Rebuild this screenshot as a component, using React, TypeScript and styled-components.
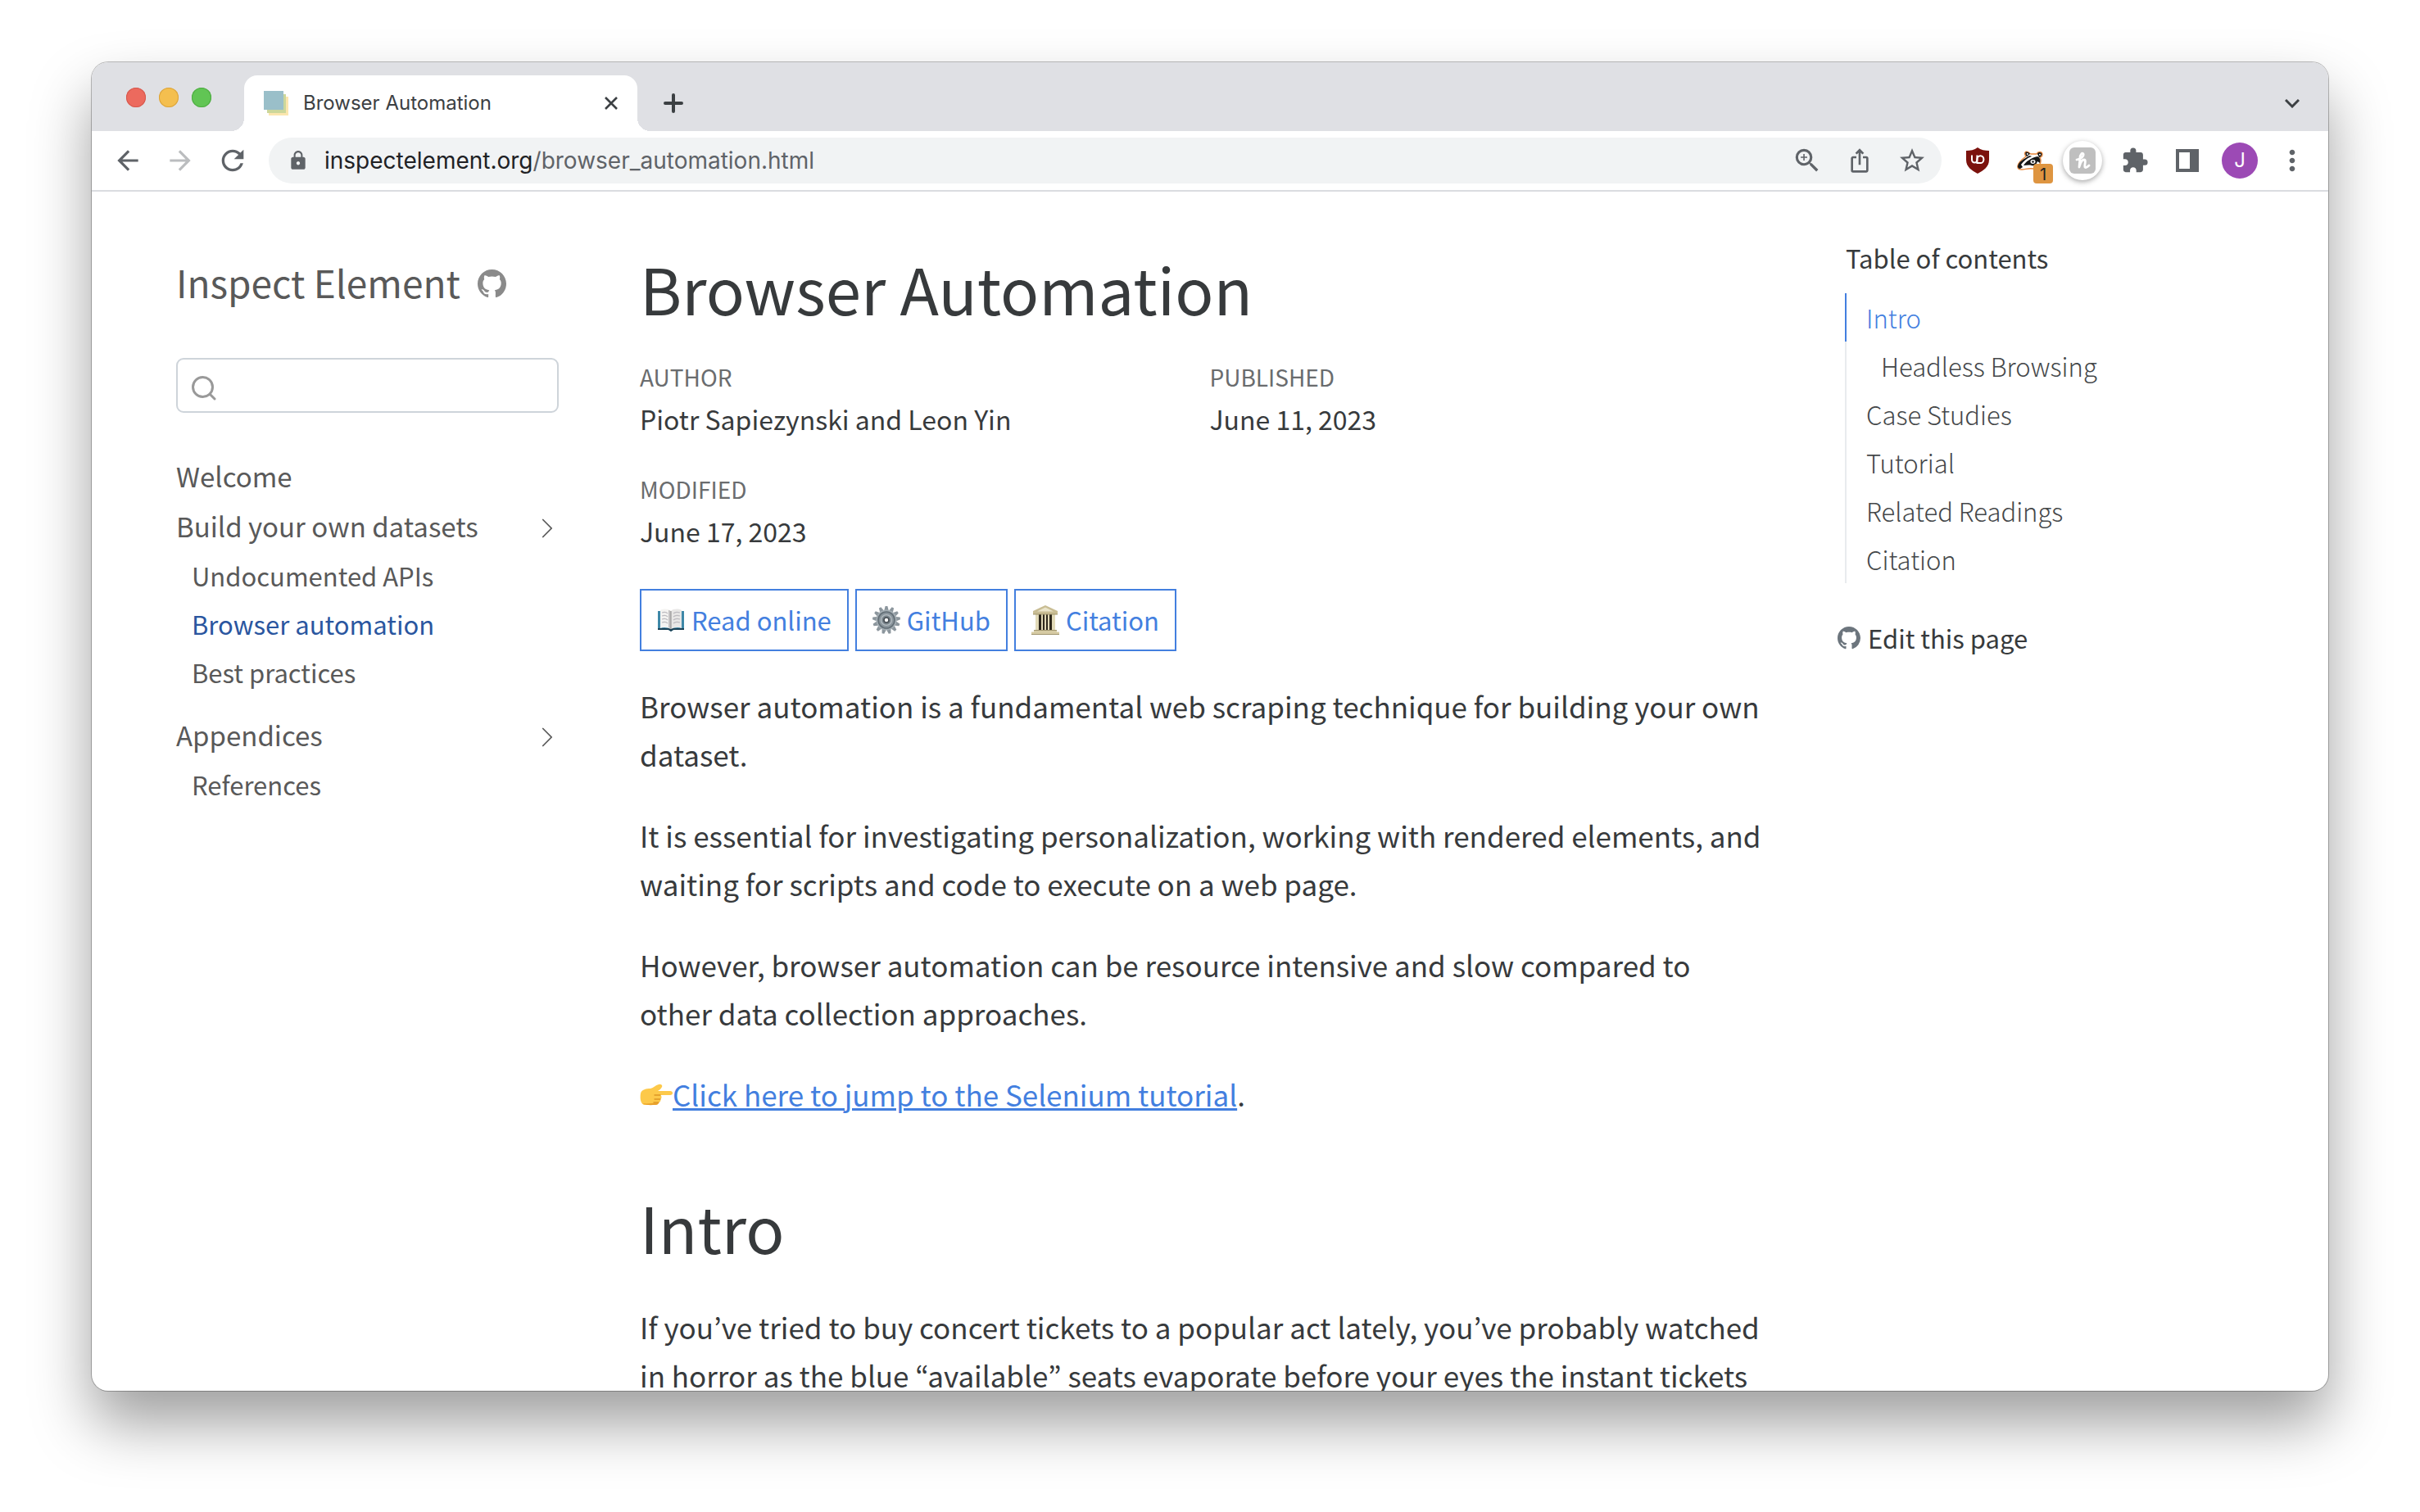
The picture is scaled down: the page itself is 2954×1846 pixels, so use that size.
import React from "react";
import styled, { createGlobalStyle } from "styled-components";
import { MdArrowBack, MdArrowForward, MdRefresh, MdLock, MdZoomIn, MdIosShare, MdStarBorder, MdExtension, MdMoreVert } from "react-icons/md";
import { BsGithub, BsChevronRight } from "react-icons/bs";

const ui = `Inter, Roboto, "Liberation Sans", sans-serif`;
const page = `"Noto Sans CJK KR", "Noto Sans", sans-serif`;
const blue = "#437fdf";

const GlobalStyle = createGlobalStyle`
  * { box-sizing: border-box; }
  body { margin: 0; background: #fff; }
  h1, h2, h3, p, ul, dl, dd, dt { margin: 0; padding: 0; font-weight: 400; }
  ul { list-style: none; }
  button { border: 0; background: none; padding: 0; color: inherit; font: inherit; cursor: pointer; }
  a { color: inherit; text-decoration: none; }
  svg { display: block; flex: none; }
`;

const Desktop = styled.div`
  height: 100vh;
  padding: 76px 112px 148px;
  overflow: hidden;
`;

const BrowserWindow = styled.div`
  display: flex;
  flex-direction: column;
  height: 100%;
  overflow: hidden;
  border-radius: 20px;
  background: #fff;
  box-shadow: 0 0 0 1px rgba(0, 0, 0, 0.26), 0 40px 72px rgba(0, 0, 0, 0.38);
`;

/* ---------- browser chrome ---------- */

const TabStrip = styled.div`
  display: flex;
  align-items: flex-end;
  flex: none;
  height: 84px;
  padding: 0 28px 0 42px;
  background: #dfe0e4;
  color: #3c4043;
  font-family: ${ui};
`;

const TrafficLights = styled.div`
  display: flex;
  gap: 16px;
  height: 84px;
  padding-top: 31px;
  margin-right: 40px;
`;

const Light = styled.button<{ $fill: string; $edge: string }>`
  width: 24px;
  height: 24px;
  border-radius: 50%;
  background: ${(p) => p.$fill};
  box-shadow: inset 0 0 0 1px ${(p) => p.$edge};
`;

const Tab = styled.div`
  position: relative;
  display: flex;
  align-items: center;
  width: 480px;
  height: 68px;
  padding: 0 20px 0 24px;
  border-radius: 16px 16px 0 0;
  background: #fff;
  &::before, &::after {
    content: "";
    position: absolute;
    bottom: 0;
    width: 16px;
    height: 16px;
  }
  &::before { right: 100%; background: radial-gradient(circle at 0 0, transparent 16px, #fff 16px); }
  &::after { left: 100%; background: radial-gradient(circle at 100% 0, transparent 16px, #fff 16px); }
`;

const TabTitle = styled.span`
  flex: 1;
  margin-left: 16px;
  font-size: 24px;
  line-height: 32px;
`;

const IconButton = styled.button<{ $size: number; $color?: string }>`
  display: grid;
  place-items: center;
  flex: none;
  width: ${(p) => p.$size}px;
  height: ${(p) => p.$size}px;
  color: ${(p) => p.$color || "#5f6368"};
`;

const NewTab = styled(IconButton)`
  margin: 0 auto 12px 22px;
`;

const TabSearch = styled(IconButton)`
  margin-bottom: 18px;
`;

const Toolbar = styled.div`
  display: flex;
  align-items: center;
  flex: none;
  height: 74px;
  padding: 0 12px;
  border-bottom: 2px solid #dadce0;
  font-family: ${ui};
`;

const AddressBar = styled.div`
  display: flex;
  align-items: center;
  flex: 1;
  height: 56px;
  margin: 0 12px;
  padding: 0 4px 0 23px;
  border-radius: 28px;
  background: #f1f3f4;
`;

const Address = styled.button`
  flex: 1;
  margin-left: 19px;
  text-align: left;
  font-size: 28px;
  line-height: 36px;
  color: #5f6368;
  cursor: text;
`;

const Host = styled.span`
  color: #202124;
`;

const Extension = styled(IconButton)`
  position: relative;
`;

const Badge = styled.span`
  position: absolute;
  left: 36px;
  top: 36px;
  width: 24px;
  height: 24px;
  border-radius: 4px;
  background: #de9541;
  color: #202124;
  font: 20px/26px ${ui};
  text-align: center;
`;

const HoneyDisc = styled.span`
  display: grid;
  place-items: center;
  width: 48px;
  height: 48px;
  border-radius: 50%;
  background: #fff;
  box-shadow: 0 2px 6px rgba(0, 0, 0, 0.35);
`;

const Avatar = styled.span`
  display: grid;
  place-items: center;
  width: 44px;
  height: 44px;
  border-radius: 50%;
  background: #9c4ab5;
  color: #fff;
  font: 24px/44px ${ui};
`;

/* ---------- page ---------- */

const Page = styled.div`
  display: grid;
  grid-template-columns: 486fr 1391fr 487fr;
  column-gap: 80px;
  flex: 1;
  min-height: 0;
  overflow: hidden;
  padding: 0 103px;
  font-family: ${page};
  color: #373a3c;
`;

const Sidebar = styled.nav`
  padding: 78px 19px 0 0;
  color: #595959;
`;

const SiteTitle = styled.div`
  display: flex;
  align-items: baseline;
  gap: 21px;
  font-size: 46px;
  line-height: 64px;
  svg { color: #8a8a8a; }
`;

const SearchBox = styled.label`
  display: flex;
  align-items: center;
  height: 67px;
  margin: 61px 0 47px;
  padding: 6px 17px 0;
  border: 2px solid #ced4da;
  border-radius: 9px;
  color: #999;
`;

const SearchInput = styled.input`
  flex: 1;
  min-width: 0;
  margin-left: 12px;
  border: 0;
  outline: 0;
  background: none;
  font: 32px/40px ${page};
`;

const NavRow = styled.li`
  display: flex;
  align-items: center;
  justify-content: space-between;
  font-size: 33px;
  line-height: 61px;
  svg { margin-top: 4px; }
`;

const SubList = styled.ul`
  padding: 0 0 17px 19px;
`;

const SubItem = styled.li<{ $active?: boolean }>`
  font-size: 31px;
  line-height: 59px;
  color: ${(p) => (p.$active ? "#2a569f" : "inherit")};
`;

const Main = styled.main`
  min-width: 0;
  padding-top: 73px;
`;

const Heading = styled.h1`
  font-size: 78px;
  line-height: 88px;
`;

const SectionHeading = styled.h2`
  margin: 88px 0 49px;
  font-size: 78px;
  line-height: 88px;
`;

const Meta = styled.dl`
  display: grid;
  grid-template-columns: 1fr 1fr;
  row-gap: 35px;
  margin-top: 39px;
`;

const MetaLabel = styled.dt`
  font-size: 28px;
  line-height: 52px;
  color: #6a6c6e;
`;

const MetaValue = styled.dd`
  font-size: 32px;
  line-height: 50px;
`;

const Actions = styled.div`
  display: flex;
  gap: 8px;
  margin: 46px 0 37px;
`;

const Action = styled.a`
  display: flex;
  align-items: center;
  gap: 8px;
  height: 76px;
  padding: 0 19px;
  border: 2px solid ${blue};
  color: ${blue};
  font-size: 31px;
  line-height: 44px;
`;

const Paragraph = styled.p`
  margin: 0 20px 40px 0;
  font-size: 35px;
  line-height: 59px;
`;

const Hand = styled.span`
  display: inline-block;
  vertical-align: 1px;
`;

const InlineLink = styled.a`
  color: ${blue};
  text-decoration: underline;
  text-decoration-thickness: 3px;
`;

const Toc = styled.aside`
  padding-top: 52px;
`;

const TocTitle = styled.h2`
  padding-left: 1px;
  font-size: 31px;
  line-height: 58px;
`;

const TocList = styled.ul`
  margin-top: 14px;
`;

const TocItem = styled.li<{ $active?: boolean; $nested?: boolean }>`
  padding-left: ${(p) => (p.$nested ? 42 : 24)}px;
  border-left: 2px solid ${(p) => (p.$active ? blue : "#e9ebee")};
  color: ${(p) => (p.$active ? blue : "#45484a")};
  font-size: 31px;
  font-weight: 300;
  line-height: 59px;
`;

const EditLink = styled.a`
  display: flex;
  align-items: center;
  gap: 9px;
  margin: 38px 0 0 -9px;
  font-size: 31px;
  line-height: 58px;
  svg { color: #6c757d; }
`;

/* ---------- drawings ---------- */

const Favicon = () => (
  <svg width="32" height="32" viewBox="0 0 32 32">
    <rect x="6" y="8" width="24" height="23" fill="#fbe6ae" />
    <rect x="4" y="5" width="23" height="23" fill="#ccd79b" />
    <rect x="0" y="1" width="24" height="23" fill="#9abfc9" />
  </svg>
);

const Shield = () => (
  <svg width="28" height="32" viewBox="0 0 28 32">
    <path d="M14 0 C10 3 5 4 0 4 V15 C0 24 7 28 14 32 C21 28 28 24 28 15 V4 C23 4 18 3 14 0Z" fill="#7b120d" />
    <path d="M7 9.5 V15 A3.2 3.6 0 0 0 13.4 15 V9.5" fill="none" stroke="#fff" strokeWidth="2" />
    <path d="M13.4 14.5 A4 4.4 0 1 1 17.4 19 H13.4Z" fill="none" stroke="#fff" strokeWidth="2" />
  </svg>
);

const Badger = () => (
  <svg width="32" height="24" viewBox="0 0 32 24">
    <path d="M1 20 C0 16 4 12 11 7 C8 3 10 0 14 2 L17 4 H24 C26 0 31 1 31 5 C31 7 29 8 28 8 C31 14 27 21 20 22 C14 21 10 23 6 23 C3 23 1 22 1 20Z" fill="#fff" stroke="#e8873a" strokeWidth="1.4" />
    <path d="M10.500 2 C12 1 15 2 16 4 L12 7 C10 5 10 3 10.500 2Z M25 4 C26 1 30 2 30.500 4 C30 7 28 8 27 8Z" fill="#161616" />
    <circle cx="12.800" cy="4" r="1" fill="#fff" />
    <circle cx="28" cy="4.800" r="1" fill="#fff" />
    <path d="M1 19 C2 14 7 11 12 8 C14 6 17 6 18 7 C12 9 8 13 5 17 L7 20 L4 22 C2 22 1 21 1 19Z" fill="#161616" />
    <path d="M8 18 C11 13 17 9 25 7 C28 8 29 11 28 15 L25 13 C24 17 21 19 18 18 C14 17 11 18 8 18Z" fill="#161616" />
    <ellipse cx="19.500" cy="13.500" rx="3" ry="2.400" fill="#fff" />
    <circle cx="19.500" cy="13.500" r="1.300" fill="#161616" />
  </svg>
);

const Honey = () => (
  <svg width="32" height="32" viewBox="0 0 32 32">
    <rect width="32" height="32" rx="6" fill="#bfbfbf" />
    <path d="M9 15 C14 14 18 11 17 8 C16 6 13 8 13 13 L12 24 C13 20 15 15 18 15 C21 15 18 22 19 24 C20 25 22 24 24 22" fill="none" stroke="#fff" strokeWidth="2.8" strokeLinecap="round" strokeLinejoin="round" />
  </svg>
);

const SidePanel = () => (
  <svg width="28" height="28" viewBox="0 0 28 28">
    <path d="M0 0H28V28H0Z M4 4V24H17V4Z" fill="currentColor" fillRule="evenodd" />
  </svg>
);

const Magnifier = () => (
  <svg width="30" height="30" viewBox="0 0 30 30" fill="none" stroke="currentColor" strokeWidth="3" strokeLinecap="round">
    <circle cx="13.5" cy="13.5" r="12" />
    <path d="M22.5 22.5 L28 28" />
  </svg>
);

const Book = () => (
  <svg width="34" height="28" viewBox="0 0 34 28">
    <path d="M1 3 H33 V26 H20 L17 28 L14 26 H1Z" fill="#3f88a8" />
    <path d="M1 24 H33 V26 H20 L17 28 L14 26 H1Z" fill="#1c4256" />
    <path d="M4 2 C8 0 14 0 17 3 V25 C13 23 8 22 4 24Z" fill="#f4f3f1" />
    <path d="M30 2 C26 0 20 0 17 3 V25 C21 23 26 22 30 24Z" fill="#e8e7e6" />
    <path d="M14 2 C16 2 17 3 17 4 V25 L14 23Z" fill="#c3c1c2" />
    <path d="M17 3 V25" stroke="#8c8c8c" strokeWidth="1" />
    <path d="M6 5 C9 4 11 4 13 6 M6 9 C9 8 11 8 13 10 M6 13 C9 12 11 12 13 14 M6 17 C9 16 11 16 13 18 M20 6 C22 4 25 4 28 5 M20 10 C22 8 25 8 28 9 M20 14 C22 12 25 12 28 13 M20 18 C22 16 25 16 28 17" fill="none" stroke="#bcbabf" strokeWidth="1.2" />
  </svg>
);

const Gear = () => (
  <svg width="34" height="36" viewBox="0 0 34 36">
    {Array.from({ length: 13 }, (_, i) => (
      <path key={i} d="M14.4 6 L15.6 1 H18.4 L19.6 6Z" fill="#8c969d" transform={`rotate(${(i * 360) / 13} 17 18)`} />
    ))}
    <circle cx="17" cy="18" r="12.6" fill="#a3adb3" />
    <circle cx="17" cy="18" r="10" fill="#8a959c" stroke="#636e76" strokeWidth="1.6" />
    <circle cx="17" cy="18" r="6.4" fill="#7a858c" stroke="#b3bbc0" strokeWidth="1.4" />
    <circle cx="17" cy="18" r="3" fill="#fff" stroke="#464d53" strokeWidth="1.6" />
  </svg>
);

const Temple = () => (
  <svg width="34" height="36" viewBox="0 0 34 36">
    <path d="M17 0 L32 7 V11 H2 V7Z" fill="#c9bd94" />
    <path d="M17 2.500 L27 7.500 H7Z" fill="#ebe5cb" />
    <rect x="5" y="11" width="24" height="19" fill="#2e281c" />
    <path d="M5 11h4v19h-4z M12 11h2v19h-2z M16 11h2v19h-2z M20 11h2v19h-2z M25 11h4v19h-4z" fill="#e2dab8" />
    <path d="M3 30H31V32.500H34V36H0V32.500H3Z" fill="#d6cba4" />
    <path d="M0 35.500H34 M3 30.500H31 M2 11H32" stroke="#a0956e" />
  </svg>
);

const PointingHand = () => (
  <svg width="40" height="27" viewBox="0 0 40 27">
    <path d="M1 12 C2 7 8 6 13 6 C17 5 19 2 23 1 C26 0 28 2 27 4 C26 6 24 8 22 9 H37 C41 9 41 14 37 14 H25 C27 15 27 18 25 19 C26 21 25 22 23 23 C23 25 21 26 19 26 H5 C1 24 0 18 1 12Z" fill="#fdc94a" />
    <path d="M25 14 H18 M25 19 H18 M23 23 H17" stroke="#dd9726" strokeWidth="1.4" strokeLinecap="round" />
    <path d="M3 24 C8 27 15 26 19 26 C21 26 23 25 23 23 C16 24 8 25 3 24Z" fill="#e9a02a" />
  </svg>
);

const subPages = ["Undocumented APIs", "Browser automation", "Best practices"];
const tocEntries = ["Intro", "Headless Browsing", "Case Studies", "Tutorial", "Related Readings", "Citation"];
const facts = [
  ["AUTHOR", "Piotr Sapiezynski and Leon Yin"],
  ["PUBLISHED", "June 11, 2023"],
  ["MODIFIED", "June 17, 2023"],
];

export default function App() {
  return (
    <Desktop lang="en">
      <GlobalStyle />
      <BrowserWindow>
        <TabStrip>
          <TrafficLights>
            <Light $fill="#ec6a5e" $edge="#d5584d" aria-label="Close window" />
            <Light $fill="#f4bf4f" $edge="#dba33b" aria-label="Minimize window" />
            <Light $fill="#61c554" $edge="#4eab42" aria-label="Zoom window" />
          </TrafficLights>
          <Tab>
            <Favicon />
            <TabTitle>Browser Automation</TabTitle>
            <IconButton $size={24} $color="#3c4043" aria-label="Close tab">
              <svg width="16" height="16" viewBox="0 0 16 16" stroke="currentColor" strokeWidth="2.6"><path d="M1 1L15 15M15 1L1 15" /></svg>
            </IconButton>
          </Tab>
          <NewTab $size={44} $color="#3c4043" aria-label="New tab">
            <svg width="24" height="24" viewBox="0 0 24 24" stroke="currentColor" strokeWidth="4" strokeLinecap="round"><path d="M2 12H22M12 2V22" /></svg>
          </NewTab>
          <TabSearch $size={32} $color="#3c4043" aria-label="Search tabs">
            <svg width="18" height="11" viewBox="0 0 18 11" fill="none" stroke="currentColor" strokeWidth="3"><path d="M1 1L9 9L17 1" /></svg>
          </TabSearch>
        </TabStrip>

        <Toolbar>
          <IconButton $size={64} aria-label="Back"><MdArrowBack size={38} /></IconButton>
          <IconButton $size={64} $color="#bbbdbf" aria-label="Forward"><MdArrowForward size={38} /></IconButton>
          <IconButton $size={64} aria-label="Reload"><MdRefresh size={40} /></IconButton>
          <AddressBar>
            <MdLock size={26} color="#5f6368" />
            <Address aria-label="Address"><Host>inspectelement.org</Host>/browser_automation.html</Address>
            <IconButton $size={64} aria-label="Zoom"><MdZoomIn size={38} /></IconButton>
            <IconButton $size={64} aria-label="Share"><MdIosShare size={32} /></IconButton>
            <IconButton $size={64} aria-label="Bookmark"><MdStarBorder size={36} /></IconButton>
          </AddressBar>
          <Extension $size={64} aria-label="uBlock Origin"><Shield /></Extension>
          <Extension $size={64} aria-label="Privacy Badger"><Badger /><Badge>1</Badge></Extension>
          <Extension $size={64} aria-label="Honey"><HoneyDisc><Honey /></HoneyDisc></Extension>
          <IconButton $size={64} aria-label="Extensions"><MdExtension size={34} /></IconButton>
          <IconButton $size={64} aria-label="Side panel"><SidePanel /></IconButton>
          <IconButton $size={64} aria-label="Profile"><Avatar>J</Avatar></IconButton>
          <IconButton $size={64} aria-label="Menu"><MdMoreVert size={40} /></IconButton>
        </Toolbar>

        <Page>
          <Sidebar>
            <SiteTitle>
              <a href="#home">Inspect Element</a>
              <a href="#source" aria-label="Source code"><BsGithub size={35} /></a>
            </SiteTitle>
            <SearchBox>
              <Magnifier />
              <SearchInput type="search" aria-label="Search" />
            </SearchBox>
            <ul>
              <NavRow><a href="#welcome">Welcome</a></NavRow>
              <NavRow>
                <a href="#datasets">Build your own datasets</a>
                <button aria-label="Toggle section"><BsChevronRight size={28} /></button>
              </NavRow>
              <SubList>
                {subPages.map((name) => (
                  <SubItem key={name} $active={name === "Browser automation"}><a href="#page">{name}</a></SubItem>
                ))}
              </SubList>
              <NavRow>
                <a href="#appendices">Appendices</a>
                <button aria-label="Toggle section"><BsChevronRight size={28} /></button>
              </NavRow>
              <SubList>
                <SubItem><a href="#references">References</a></SubItem>
              </SubList>
            </ul>
          </Sidebar>

          <Main>
            <Heading>Browser Automation</Heading>
            <Meta>
              {facts.map(([label, value]) => (
                <div key={label}>
                  <MetaLabel>{label}</MetaLabel>
                  <MetaValue>{value}</MetaValue>
                </div>
              ))}
            </Meta>
            <Actions>
              <Action href="#read"><Book />Read online</Action>
              <Action href="#github"><Gear />GitHub</Action>
              <Action href="#citation"><Temple />Citation</Action>
            </Actions>
            <Paragraph>Browser automation is a fundamental web scraping technique for building your own dataset.</Paragraph>
            <Paragraph>It is essential for investigating personalization, working with rendered elements, and waiting for scripts and code to execute on a web page.</Paragraph>
            <Paragraph>However, browser automation can be resource intensive and slow compared to other data collection approaches.</Paragraph>
            <Paragraph>
              <Hand><PointingHand /></Hand>
              <InlineLink href="#tutorial">Click here to jump to the Selenium tutorial</InlineLink>.
            </Paragraph>
            <SectionHeading id="intro">Intro</SectionHeading>
            <Paragraph>If you’ve tried to buy concert tickets to a popular act lately, you’ve probably watched in horror as the blue “available” seats evaporate before your eyes the instant tickets</Paragraph>
          </Main>

          <Toc>
            <TocTitle>Table of contents</TocTitle>
            <TocList>
              {tocEntries.map((name) => (
                <TocItem key={name} $active={name === "Intro"} $nested={name === "Headless Browsing"}>
                  <a href="#section">{name}</a>
                </TocItem>
              ))}
            </TocList>
            <EditLink href="#edit"><BsGithub size={28} />Edit this page</EditLink>
          </Toc>
        </Page>
      </BrowserWindow>
    </Desktop>
  );
}
